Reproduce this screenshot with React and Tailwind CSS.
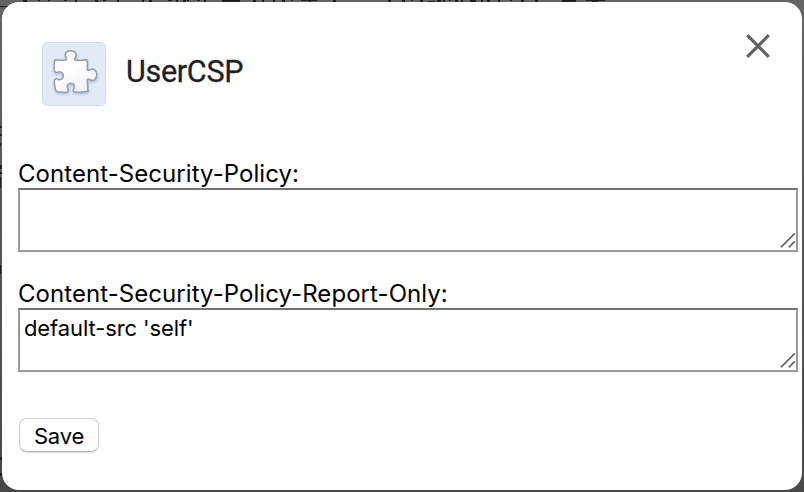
import React, { useState } from 'react'

// Slivers of the dimmed page text that show around the dialog: [x, y, width, height]
const PAGE_MARKS = [
    [0, 6, 17, 1], [23, 0, 4, 2], [38, 0, 2, 1], [48, 0, 2, 1], [64, 0, 3, 1], [75, 0, 2, 2],
    [95, 0, 3, 2], [103, 0, 3, 1], [117, 0, 2, 2], [142, 0, 2, 2], [149, 0, 3, 2], [168, 0, 4, 1],
    [176, 0, 2, 2], [183, 0, 3, 2], [187, 0, 2, 1], [197, 0, 3, 1], [204, 0, 2, 2], [222, 0, 18, 2],
    [253, 0, 3, 2], [262, 0, 2, 2], [273, 0, 2, 2], [282, 0, 3, 2], [291, 0, 2, 1], [301, 0, 16, 1],
    [309, 0, 2, 2], [333, 0, 3, 2], [388, 0, 3, 2], [402, 0, 3, 2], [411, 0, 2, 1], [420, 0, 3, 2],
    [428, 1, 7, 1], [437, 0, 4, 2], [443, 0, 2, 2], [449, 0, 2, 1], [455, 0, 3, 2], [461, 0, 2, 2],
    [470, 0, 6, 2], [481, 0, 2, 2], [487, 0, 3, 2], [498, 0, 2, 2], [510, 0, 2, 1], [521, 0, 3, 2],
    [535, 0, 3, 2], [562, 0, 14, 2], [586, 0, 19, 1], [592, 1, 6, 1],
    [0, 126, 2, 2], [0, 134, 2, 2], [0, 143, 1, 3], [0, 165, 2, 4], [0, 172, 2, 2], [0, 177, 1, 11],
    [0, 265, 1, 9], [0, 457, 2, 3], [0, 473, 2, 3],
]

function PageBehind() {
    return (
        <svg className="absolute inset-0 h-full w-full" viewBox="0 0 804 492" aria-hidden="true">
            {PAGE_MARKS.map(([x, y, w, h], i) => (
                <rect key={i} x={x} y={y} width={w} height={h} fill="#1f1e1e" />
            ))}
        </svg>
    )
}

function PuzzleIcon() {
    return (
        <svg className="h-16 w-16" viewBox="0 0 64 64" aria-hidden="true">
            <defs>
                <linearGradient id="piece" x1="0" y1="0" x2="1" y2="1">
                    <stop offset="0.35" stopColor="#ffffff" />
                    <stop offset="1" stopColor="#eef1f7" />
                </linearGradient>
                <filter id="pieceShadow" x="-20%" y="-20%" width="140%" height="140%">
                    <feDropShadow dx="0.3" dy="1.3" stdDeviation="1.3" floodColor="#6f8ab8" floodOpacity="0.5" />
                </filter>
            </defs>
            <rect x="0.5" y="0.5" width="63" height="63" rx="4.5" fill="#e2eaf6" stroke="#d3dcea" />
            <path
                d="M12.6 17.8 C16 18.4 20.5 18.3 23.4 18.1 C25.4 17.8 24.8 16.6 24 15.2 C21.9 11.8 24.3 8.8 28.7 8.8 C33.1 8.8 35.5 11.8 33.4 15.2 C32.5 16.6 32 17.9 33.6 18.1 C37 18.4 41 18.4 45 17.8 C45.6 21 45.4 24.5 45.2 27 C45.1 28.8 46.4 28.5 47.7 27.8 C51.3 25.8 54.8 28.6 54.8 32.6 C54.8 37.2 51.3 39.9 47.7 37.7 C46.2 36.8 45.1 36.6 45.2 38.4 C45.6 42 45.6 46 46 49.3 C42 50 37.5 50.4 33.4 50.1 C31.1 50 30.6 48.7 31.8 47 C33.6 44.3 32.2 41.2 28.9 41.2 C25.6 41.2 24.1 44.3 25.9 47 C27 48.7 26.4 50 24.3 50.2 C20.5 50.4 17 50.2 14 49.3 C12.8 46 12.5 42.6 12.3 39.4 C12.3 37 13.8 36.3 15.6 37.2 C18.4 38.5 21.4 36.6 21.4 33.7 C21.4 30.7 18.4 28.9 15.6 30.1 C13.8 30.9 12.3 30.3 12.3 28 C12.4 24.5 12 20.5 12.6 17.8 Z"
                fill="url(#piece)"
                stroke="#979fae"
                strokeWidth="1.5"
                strokeLinejoin="round"
                filter="url(#pieceShadow)"
            />
        </svg>
    )
}

function PolicyField({ label, value, onChange }) {
    return (
        <label className="block h-[120px]">
            <span className="block h-[30px] whitespace-nowrap pt-px text-[24px] leading-[30px] tracking-[0.06px]">
                {label}
            </span>
            <span className="relative block">
                <textarea
                    className="block h-16 w-[780px] resize-none overflow-hidden border-2 border-[#9a9a9a] border-t-[#717171] bg-white px-1 py-1 text-[22px] leading-[28px] tracking-[-0.1px] outline-none"
                    value={value}
                    onChange={onChange}
                    spellCheck={false}
                />
                <svg
                    className="pointer-events-none absolute right-1.5 bottom-1 h-4 w-4"
                    viewBox="0 0 16 16"
                    fill="none"
                    aria-hidden="true"
                >
                    <path d="M1.8 15.8 L15.4 2.2 M9.8 15.8 L15.4 10.2" stroke="#c6c6c6" />
                    <path d="M0.8 15.2 L14.8 1.2 M8.8 15.2 L14.8 9.2" stroke="#555555" strokeWidth="1.4" />
                </svg>
            </span>
        </label>
    )
}

export default function App() {
    const [policy, setPolicy] = useState('')
    const [reportOnly, setReportOnly] = useState("default-src 'self'")

    return (
        <div className="relative h-[492px] w-[804px] overflow-hidden bg-gradient-to-b from-[#656565] to-[#484848] p-0.5 font-['Inter','Liberation_Sans',sans-serif] text-black">
            <PageBehind />

            {/* Dialog */}
            <div className="relative h-[488px] w-[800px] rounded-[17px] bg-white">
                {/* Header */}
                <div className="flex h-[156px] items-start pt-10 pl-10">
                    <PuzzleIcon />
                    <h1 className="ml-5 h-[60px] text-[30.5px] leading-[59px] tracking-[-0.3px] text-[#202124] font-['Roboto',sans-serif] [-webkit-text-stroke:0.3px_#202124]">
                        UserCSP
                    </h1>
                    <button className="-mt-2 mr-8 ml-auto h-6 w-6" aria-label="Close">
                        <svg className="h-6 w-6" viewBox="0 0 24 24" fill="none" aria-hidden="true">
                            <path d="M1.2 1.2 L22.8 22.8 M22.8 1.2 L1.2 22.8" stroke="#5f6368" strokeWidth="3.2" />
                        </svg>
                    </button>
                </div>

                {/* Form */}
                <div className="pl-4">
                    <PolicyField
                        label="Content-Security-Policy:"
                        value={policy}
                        onChange={(e) => setPolicy(e.target.value)}
                    />
                    <PolicyField
                        label="Content-Security-Policy-Report-Only:"
                        value={reportOnly}
                        onChange={(e) => setReportOnly(e.target.value)}
                    />
                    <button className="mt-5 ml-px block h-[34px] w-20 rounded-[8px] border border-[#cfcfcf] border-b-[#b5b5b5] bg-white pt-px text-[22px] leading-[32px] tracking-[-0.2px] shadow-[0_1px_1px_rgba(0,0,0,0.12)]">
                        Save
                    </button>
                </div>
            </div>
        </div>
    )
}
